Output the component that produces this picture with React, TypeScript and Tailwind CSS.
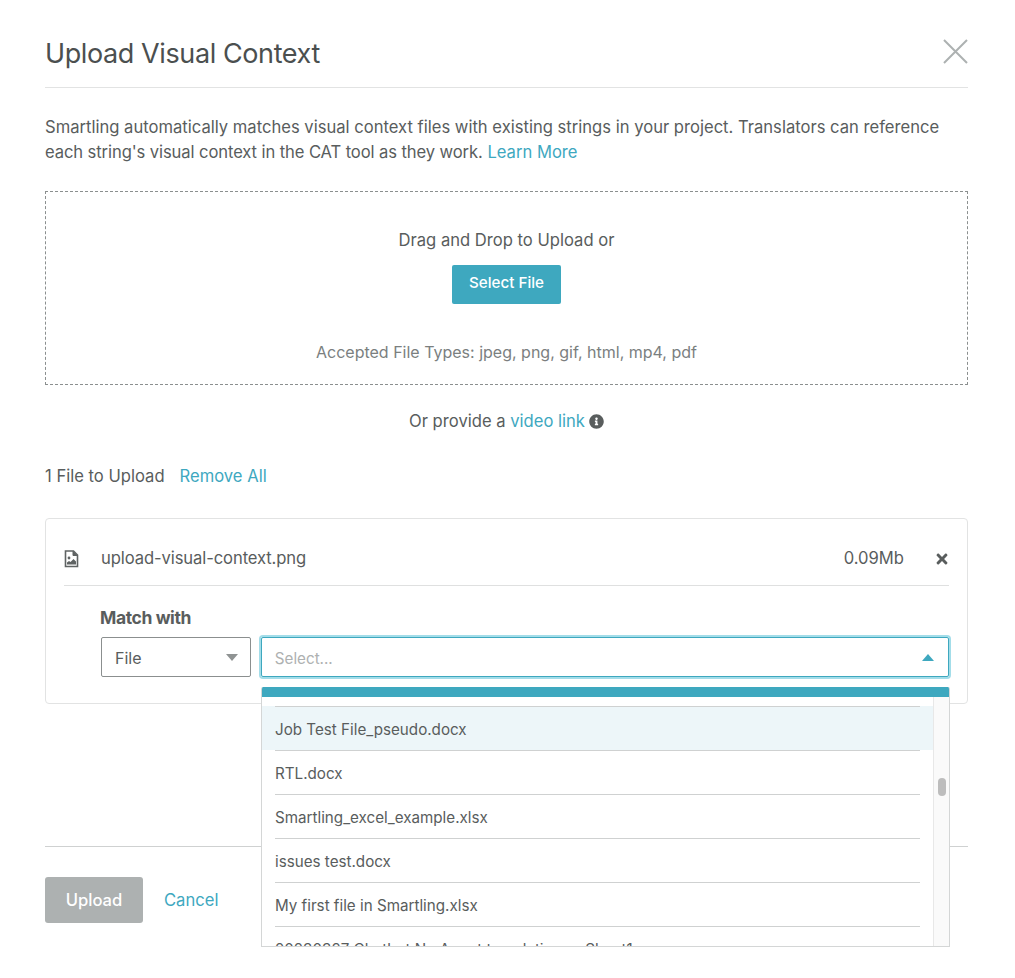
import { FaTimes, FaInfoCircle } from "react-icons/fa";

const files = [
  "Job Test File_pseudo.docx",
  "RTL.docx",
  "Smartling_excel_example.xlsx",
  "issues test.docx",
  "My first file in Smartling.xlsx",
  "20230327 Chatbot No Agent translations - Sheet1",
];

function FileImageIcon() {
  return (
    <svg width="15" height="18" viewBox="0 0 15 18" className="shrink-0">
      <path d="M1.5 1h8l4 4v11.5h-12z" fill="none" stroke="#5f6363" strokeWidth="1.6" />
      <path d="M9 1v4.5h4.5" fill="#5f6363" stroke="#5f6363" strokeWidth="1" />
      <circle cx="5" cy="8" r="1.4" fill="#5f6363" />
      <path d="M3 14.5v-2l2-1.5 1.500 1 3-3 2.500 2.500v3z" fill="#5f6363" />
    </svg>
  );
}

function CloseIcon() {
  return (
    <svg width="25" height="25" viewBox="0 0 25 25" className="mt-[4px]">
      <path d="M1 1l23 23M24 1L1 24" stroke="#adb1b1" strokeWidth="2" fill="none" />
    </svg>
  );
}

function FileDropdown() {
  return (
    <div className="absolute left-[215px] top-[168px] z-10 h-[260px] w-[689px] overflow-hidden rounded-t-[2px] border-x border-b border-[#d4d6d6] bg-white text-[15.2px] tracking-normal">
      <div className="-mx-px h-[10px] bg-[#3ea8bf]" />
      <div className="flex">
        <ul className="w-[672px] pt-[9px]">
          {files.map((name, i) => (
            <li key={name} className={i === 0 ? "bg-[#edf6f9]" : ""}>
              <div className="mx-[13px] flex h-[44px] items-center border-t border-[#cfd1d1] pt-[3px]">
                <span className="whitespace-nowrap">{name}</span>
              </div>
            </li>
          ))}
        </ul>
        <div className="h-[250px] w-[16px] border-l border-[#e8e8e8] bg-[#fafafa] pt-[81px]">
          <div className="mx-auto h-[18px] w-[8px] rounded-full bg-[#bdbdbd]" />
        </div>
      </div>
    </div>
  );
}

export default function App() {
  return (
    <div className="h-[978px] overflow-hidden bg-white pl-[45px] pr-[47px] font-['Inter',sans-serif] text-[16.6px] text-[#595d5d]">
      <header className="flex h-[88px] items-start justify-between border-b border-[#e2e3e3] pt-[35px]">
        <h1 className="text-[27px] leading-[38px] tracking-[-0.4px] text-[#4b4f4f]">Upload Visual Context</h1>
        <CloseIcon />
      </header>

      <p className="mt-[27px] leading-[25px]">
        Smartling automatically matches visual context files with existing strings in your project. Translators can reference
        <br />
        <span className="tracking-[-0.1px]">each string's visual context in the CAT tool as they work.</span> <a className="text-[#3ea8bf]">Learn More</a>
      </p>

      <section className="mt-[26px] flex h-[194px] flex-col items-center border border-dashed border-[#8b8f8f] pt-[36px]">
        <div className="leading-[24px]">Drag and Drop to Upload or</div>
        <button className="mt-[13px] h-[39px] w-[109px] rounded-[2px] bg-[#3ea8bf] pb-[2px] text-[15.2px] font-medium text-white">Select File</button>
        <div className="mt-[36px] text-[16px] leading-[24px] text-[#7b7f7f]">Accepted File Types: jpeg, png, gif, html, mp4, pdf</div>
      </section>

      <div className="mt-[24px] flex items-center justify-center gap-[4px] leading-[24px]">
        <span>
          Or provide a <a className="text-[#3ea8bf]">video link</a>
        </span>
        <FaInfoCircle size={15} className="text-[#595d5d]" />
      </div>

      <div className="mt-[31px] flex gap-[15px] leading-[24px]">
        <span>1 File to Upload</span>
        <a className="text-[#3ea8bf]">Remove All</a>
      </div>

      <section className="relative mt-[30px] h-[186px] rounded-[4px] border border-[#e2e3e3] px-[18px]">
        <div className="flex h-[67px] items-center border-b border-[#dfe0e0] pt-[13px]">
          <FileImageIcon />
          <span className="ml-[22px] tracking-[-0.1px]">upload-visual-context.png</span>
          <span className="ml-auto">0.09Mb</span>
          <FaTimes size={16} className="ml-[30px] -mr-px text-[#595d5d]" />
        </div>
        <div className="pl-[37px]">
          <div className="mt-[20px] -ml-px text-[17.5px] font-bold leading-[24px] tracking-[-0.4px]">Match with</div>
          <div className="mt-[7px] flex gap-[10px]">
            <div className="flex h-[40px] w-[150px] items-center justify-between rounded-[2px] border border-[#8b8f8f] pl-[13px] pr-[12px] text-[16px]">
              <span className="pt-px">File</span>
              <span className="h-0 w-0 border-x-[6px] border-t-[7px] border-x-transparent border-t-[#8f9393]" />
            </div>
            <div className="flex h-[40px] w-[689px] items-center justify-between rounded-[2px] border border-[#3ea8bf] pl-[13px] pr-[14px] text-[15.2px] shadow-[0_0_0_2px_#a3dde9]">
              <span className="pt-[4px] text-[#aeb1b1]">Select...</span>
              <span className="h-0 w-0 border-x-[6px] border-b-[7px] border-x-transparent border-b-[#3ea8bf]" />
            </div>
          </div>
        </div>
        <FileDropdown />
      </section>

      <footer className="mt-[142px] flex items-center gap-[21px] border-t border-[#cfd1d1] pt-[30px]">
        <button className="h-[46px] w-[98px] rounded-[3px] bg-[#adb1b1] font-medium text-white">Upload</button>
        <a className="text-[#3ea8bf]">Cancel</a>
      </footer>
    </div>
  );
}
